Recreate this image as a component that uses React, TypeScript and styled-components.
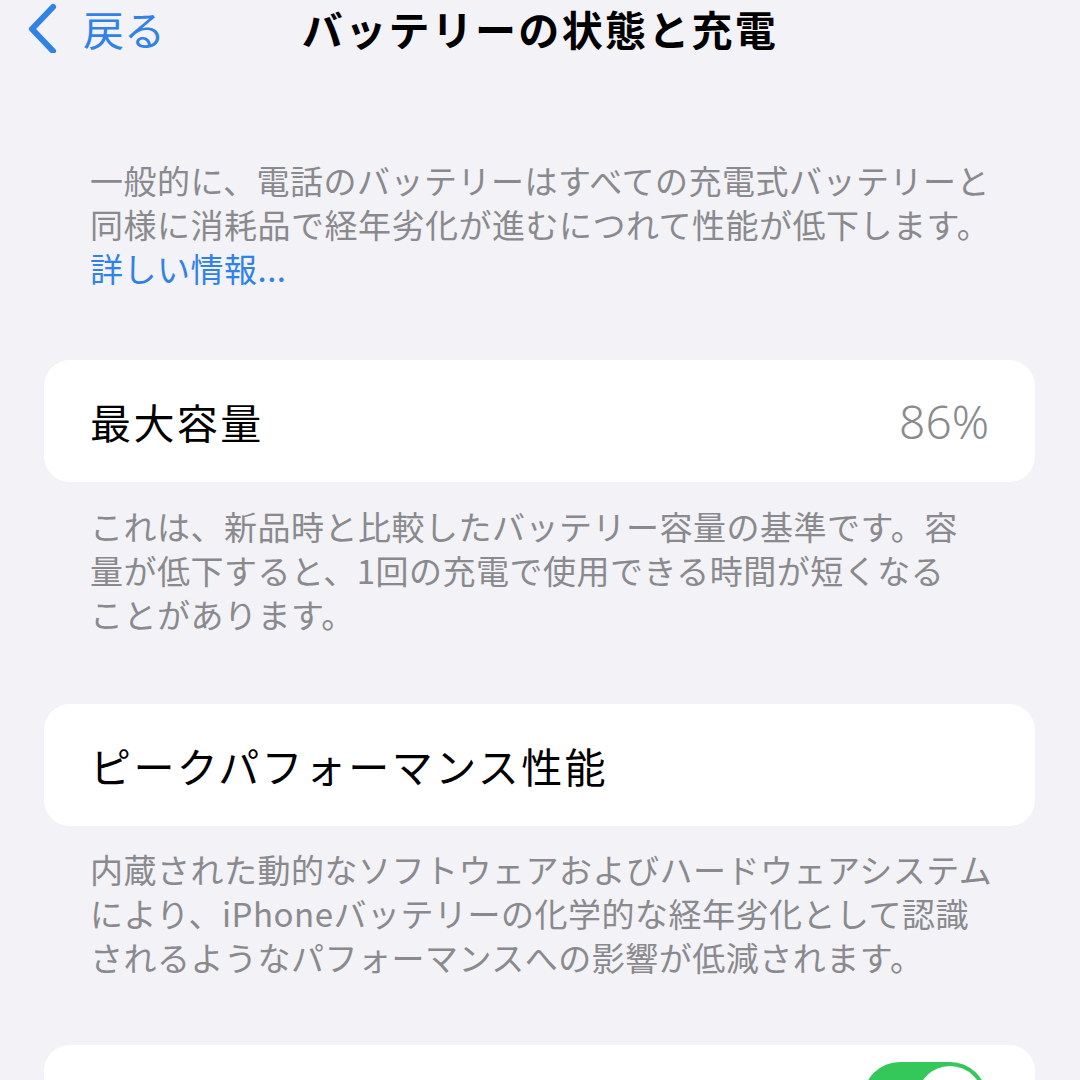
import { createGlobalStyle, styled } from "styled-components";

const GlobalStyle = createGlobalStyle`
  html, body {
    margin: 0;
    padding: 0;
    background: #f2f2f7;
  }
  body {
    width: 1080px;
    height: 1080px;
    overflow: hidden;
    font-family: "Noto Sans CJK JP", "Noto Sans", sans-serif;
  }
`;

const Page = styled.div`
  width: 1080px;
  height: 1080px;
  background: #f2f2f7;
  display: flex;
  flex-direction: column;

  & > * {
    flex-shrink: 0;
  }
`;

const NavBar = styled.div`
  position: relative;
  height: 56px;
  display: flex;
  align-items: center;
  justify-content: center;
`;

const BackButton = styled.div`
  position: absolute;
  left: 24px;
  top: 0;
  height: 56px;
  display: flex;
  align-items: center;
  gap: 25px;
  color: #3182e6;
  font-size: 41px;
  line-height: 1;

  svg {
    display: block;
  }
`;

const Title = styled.h1`
  margin: 0;
  font-size: 41px;
  font-weight: 700;
  color: #000;
  letter-spacing: 2.3px;
  line-height: 1;
`;

const Footnote = styled.p<{ $top: number; $bottom: number }>`
  margin: 0;
  padding: ${(p) => p.$top}px 40px ${(p) => p.$bottom}px 90px;
  font-size: 33px;
  letter-spacing: 0.5px;
  line-height: 44px;
  color: #8a8a8e;
  white-space: nowrap;
`;

const Link = styled.span`
  color: #3182e6;
`;

const Card = styled.div`
  margin: 0 45px 0 44px;
  height: 122px;
  background: #fff;
  border-radius: 26px;
  display: flex;
  align-items: center;
  justify-content: space-between;
  padding: 0 46px;
  box-sizing: border-box;
`;

const Label = styled.span`
  font-size: 41px;
  letter-spacing: 2.4px;
  color: #000;
`;

const Value = styled.span`
  font-size: 46px;
  font-weight: 300;
  color: #8a8a8e;
  font-family: "Noto Sans", sans-serif;
`;

const Toggle = styled.div`
  align-self: flex-start;
  width: 124px;
  height: 74px;
  border-radius: 37px;
  background: #34c759;
  position: relative;
  margin-top: 17px;
  margin-right: 2px;

  &::after {
    content: "";
    position: absolute;
    right: 4px;
    top: 4px;
    width: 66px;
    height: 66px;
    border-radius: 50%;
    background: #fff;
  }
`;

export default function App() {
  return (
    <Page>
      <GlobalStyle />
      <NavBar>
        <BackButton>
          <svg width="34" height="50" viewBox="0 0 34 50">
            <path
              d="M29 4 L8 26 L29 48"
              fill="none"
              stroke="#3182e6"
              strokeWidth="6"
              strokeLinecap="round"
              strokeLinejoin="round"
            />
          </svg>
          <span>戻る</span>
        </BackButton>
        <Title>バッテリーの状態と充電</Title>
      </NavBar>

      <Footnote $top={102} $bottom={70}>
        一般的に、電話のバッテリーはすべての充電式バッテリーと
        <br />
        同様に消耗品で経年劣化が進むにつれて性能が低下します。
        <br />
        <Link>詳しい情報...</Link>
      </Footnote>

      <Card>
        <Label>最大容量</Label>
        <Value>86%</Value>
      </Card>

      <Footnote $top={22} $bottom={68}>
        これは、新品時と比較したバッテリー容量の基準です。容
        <br />
        量が低下すると、1回の充電で使用できる時間が短くなる
        <br />
        ことがあります。
      </Footnote>

      <Card>
        <Label>ピークパフォーマンス性能</Label>
      </Card>

      <Footnote $top={21} $bottom={66}>
        内蔵された動的なソフトウェアおよびハードウェアシステム
        <br />
        により、iPhoneバッテリーの化学的な経年劣化として認識
        <br />
        されるようなパフォーマンスへの影響が低減されます。
      </Footnote>

      <Card>
        <span />
        <Toggle />
      </Card>
    </Page>
  );
}
